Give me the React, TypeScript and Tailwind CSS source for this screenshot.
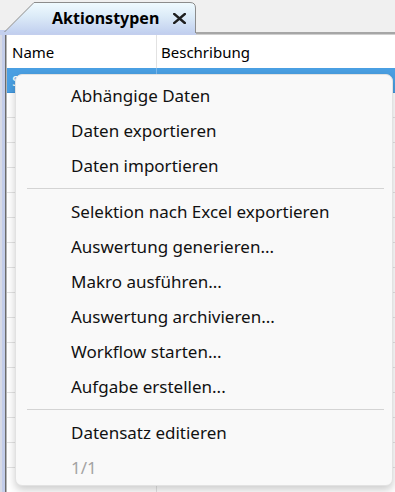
const items: (string | null)[] = [
  "Abhängige Daten",
  "Daten exportieren",
  "Daten importieren",
  null,
  "Selektion nach Excel exportieren",
  "Auswertung generieren...",
  "Makro ausführen...",
  "Auswertung archivieren...",
  "Workflow starten...",
  "Aufgabe erstellen...",
  null,
  "Datensatz editieren",
];

function TabShape() {
  return (
    <svg className="absolute inset-0" width="196" height="35" viewBox="0 0 196 35">
      <defs>
        <linearGradient id="tabfill" x1="0" y1="0" x2="0" y2="1">
          <stop offset="0" stopColor="#f0fbff" />
          <stop offset="0.45" stopColor="#dcebf8" />
          <stop offset="1" stopColor="#c2d0ef" />
        </linearGradient>
      </defs>
      <rect x="0" y="30" width="196" height="5" fill="#c3cfee" />
      <path d="M4 33 L34 2.5 H190 Q195.5 2.5 195.5 8 V33 Z" fill="url(#tabfill)" />
      <path d="M4.5 32 L34 2.5 H190 Q195.5 2.5 195.5 8 V33" fill="none" stroke="#8c8c8c" strokeWidth="1" />
    </svg>
  );
}

function CloseIcon() {
  return (
    <svg width="13" height="11" viewBox="0 0 13 11" className="shrink-0">
      <path d="M1.2 1 L11.8 10 M11.8 1 L1.2 10" stroke="#1e1e1e" strokeWidth="2.4" strokeLinecap="square" />
    </svg>
  );
}

export default function App() {
  const rows = Array.from({ length: 17 });

  return (
    <div className="w-[395px] h-[492px] bg-[#f0f0f0] relative overflow-hidden font-['Noto_Sans',sans-serif] text-[#1a1a1a]">
      {/* Registerkarte */}
      <div className="flex h-[35px]">
        <div className="relative w-[196px] h-[35px] shrink-0">
          <TabShape />
          <div className="relative flex items-center h-[35px] py-[2px] pl-[52px]">
            <span className="text-[16px] font-bold leading-none text-black">Aktionstypen</span>
            <span className="ml-auto mr-[10px] pt-[2px]">
              <CloseIcon />
            </span>
          </div>
        </div>
        <div className="flex-1 self-end h-[3px] bg-[#a6a6a6] border-b border-[#cfcfcf]" />
      </div>

      {/* Tabelle */}
      <div className="flex h-[457px]">
        <div className="w-[2px] bg-[#d8dbe6]" />
        <div className="w-[3px] bg-[#c3cdea]" />
        <div className="w-px bg-[#6b6b6b]" />
        <div className="w-px bg-[#b5b5b5]" />
        <div className="flex-1 bg-white flex flex-col overflow-hidden">
          <div className="h-[33px] shrink-0 flex text-[15px] text-black">
            <div className="w-[150px] pl-[5px] pt-[2px] flex items-center border-r border-[#e2e2e2]">Name</div>
            <div className="pl-[4px] pt-[2px] flex items-center">Beschribung</div>
          </div>
          <div className="h-[25px] shrink-0 flex bg-[#4a9fe2] text-white text-[15px] border-b border-[#3f93d8]">
            <div className="w-[150px] pl-[5px] flex items-center border-r border-[#7db8ea]">Standard</div>
            <div className="flex-1" />
          </div>
          {rows.map((_, i) => (
            <div key={i} className="h-[25px] flex shrink-0 border-b border-[#e3e3e3]">
              <div className="w-[150px] border-r border-[#e3e3e3]" />
              <div className="flex-1" />
            </div>
          ))}
        </div>
      </div>

      {/* Kontextmenü */}
      <div className="absolute left-[15px] top-[74px] w-[378px] rounded-[7px] bg-[#f9f9f9] border border-[#e2e2e2] shadow-[0_4px_9px_rgba(0,0,0,0.2)] pt-[3px]">
        {items.map((label, i) =>
          label === null ? (
            <div key={i} className="h-[11px] flex items-center ml-[11px] mr-[8px]">
              <div className="h-px w-full bg-[#d4d4d4]" />
            </div>
          ) : (
            <div key={i} className="h-[35px] flex items-center pl-[55px] text-[17px] text-[#111]">
              {label}
            </div>
          )
        )}
        <div className="h-[35px] flex items-center pl-[55px] text-[17px] text-[#a3a3a3]">1/1</div>
      </div>
    </div>
  );
}
